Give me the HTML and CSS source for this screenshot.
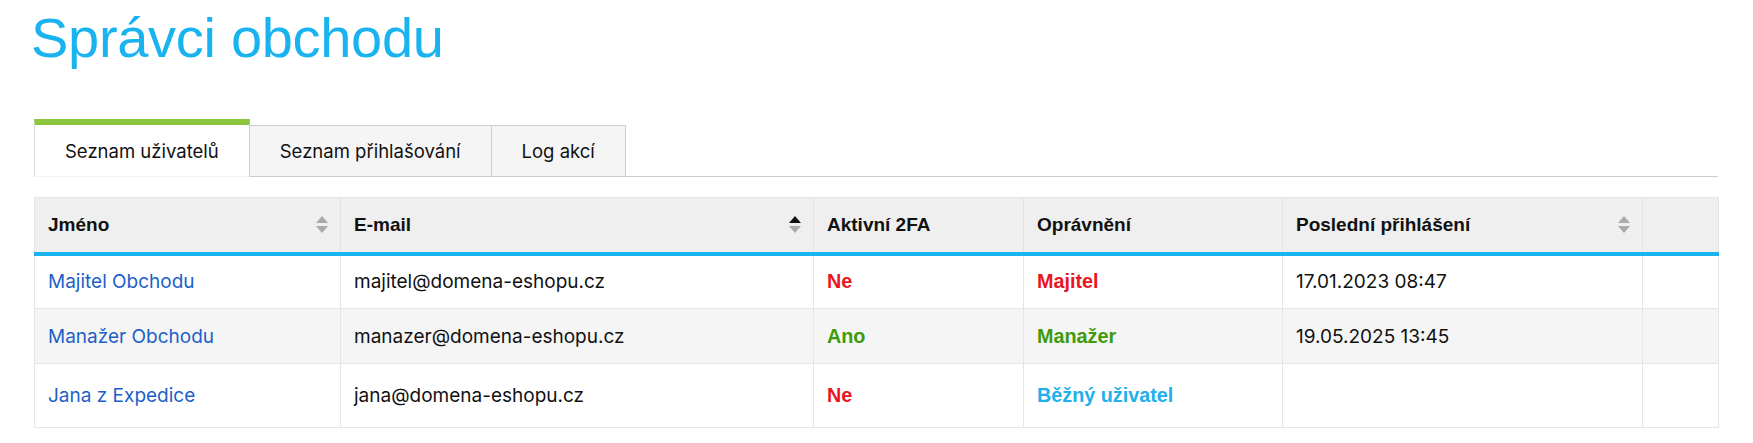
FILE: index.html
```html
<!DOCTYPE html>
<html lang="cs">
<head>
<meta charset="utf-8">
<title>Správci obchodu</title>
<link rel="stylesheet" href="styles.css">
</head>
<body>
<div class="page">
  <h1 class="title">Správci obchodu</h1>

  <div class="tabs">
    <div class="tab tab-active">Seznam uživatelů</div>
    <div class="tab">Seznam přihlašování</div>
    <div class="tab">Log akcí</div>
  </div>

  <table class="grid">
    <colgroup>
      <col class="c-name">
      <col class="c-mail">
      <col class="c-2fa">
      <col class="c-role">
      <col class="c-last">
      <col class="c-act">
    </colgroup>
    <thead>
      <tr>
        <th><div class="th-in"><span>Jméno</span><span class="sort"><i class="up"></i><i class="down"></i></span></div></th>
        <th><div class="th-in"><span>E-mail</span><span class="sort"><i class="up on"></i><i class="down"></i></span></div></th>
        <th><div class="th-in"><span>Aktivní 2FA</span></div></th>
        <th><div class="th-in"><span>Oprávnění</span></div></th>
        <th><div class="th-in"><span>Poslední přihlášení</span><span class="sort"><i class="up"></i><i class="down"></i></span></div></th>
        <th></th>
      </tr>
    </thead>
    <tbody>
      <tr class="r1">
        <td><a class="user" href="#">Majitel Obchodu</a></td>
        <td>majitel@domena-eshopu.cz</td>
        <td class="st no">Ne</td>
        <td class="st owner">Majitel</td>
        <td>17.01.2023 08:47</td>
        <td></td>
      </tr>
      <tr class="r2 alt">
        <td><a class="user" href="#">Manažer Obchodu</a></td>
        <td>manazer@domena-eshopu.cz</td>
        <td class="st yes">Ano</td>
        <td class="st manager">Manažer</td>
        <td>19.05.2025 13:45</td>
        <td></td>
      </tr>
      <tr class="r3">
        <td><a class="user" href="#">Jana z Expedice</a></td>
        <td>jana@domena-eshopu.cz</td>
        <td class="st no">Ne</td>
        <td class="st regular">Běžný uživatel</td>
        <td></td>
        <td></td>
      </tr>
    </tbody>
  </table>
</div>
</body>
</html>
```

FILE: styles.css
```css
* { box-sizing: border-box; }

html, body {
  margin: 0;
  padding: 0;
  background: #ffffff;
}

body {
  font-family: Inter, "Noto Sans", sans-serif;
  color: #111111;
}

.page {
  padding: 0 0 0 34px;
  width: 1718px;
}

.title {
  margin: 10px 0 0 -3px;
  font-family: "Liberation Sans", Arial, sans-serif;
  font-weight: 400;
  font-size: 56px;
  line-height: 56px;
  letter-spacing: -0.3px;
  color: #19b4ef;
}

.tabs {
  display: flex;
  align-items: flex-end;
  margin-top: 54px;
  height: 57px;
  border-bottom: 1px solid #cccccc;
}

.tab {
  height: 52px;
  margin-bottom: -1px;
  padding: 0 30px;
  display: flex;
  align-items: center;
  font-size: 18.5px;
  color: #111111;
  background: #f5f5f5;
  border: 1px solid #cccccc;
  border-left: none;
}

.tab-active {
  height: 58px;
  background: #ffffff;
  border-top: 6px solid #8cc63f;
  border-left: 1px solid #dddddd;
  border-right: 1px solid #cccccc;
  border-bottom: 1px solid #f2f2f2;
  padding: 0 30px;
}

.grid {
  margin-top: 20px;
  width: 1684px;
  border-collapse: collapse;
  table-layout: fixed;
  border: 1px solid #e6e6e6;
}

.c-name { width: 306px; }
.c-mail { width: 473px; }
.c-2fa  { width: 210px; }
.c-role { width: 259px; }
.c-last { width: 360px; }
.c-act  { width: 76px; }

.grid th {
  height: 56px;
  padding: 0 12px 0 13px;
  background: #efefef;
  border-right: 1px solid #e3e3e3;
  border-bottom: 4px solid #19b4ef;
  text-align: left;
  font-family: "Liberation Sans", Arial, sans-serif;
  font-weight: 700;
  font-size: 19px;
  color: #111111;
}

.th-in {
  display: flex;
  align-items: center;
  justify-content: space-between;
}

.sort {
  display: flex;
  flex-direction: column;
  gap: 3px;
  width: 12px;
}

.sort i {
  display: block;
  width: 0;
  height: 0;
  border-left: 6px solid transparent;
  border-right: 6px solid transparent;
}

.sort .up { border-bottom: 7px solid #aaaaaa; }
.sort .up.on { border-bottom-color: #111111; }
.sort .down { border-top: 7px solid #aaaaaa; }

.grid td {
  padding: 0 13px;
  font-size: 19px;
  border-right: 1px solid #e6e6e6;
  border-bottom: 1px solid #e6e6e6;
  color: #111111;
}

.grid .r1 td { height: 55px; }
.grid .r2 td { height: 55px; }
.grid .r3 td { height: 64px; }

.grid .alt td { background: #f5f5f5; }

.user {
  color: #1d5fc9;
  text-decoration: none;
}

.grid td.st {
  font-family: "Liberation Sans", Arial, sans-serif;
  font-weight: 700;
  font-size: 19.8px;
}

.grid td.no, .grid td.owner { color: #e8161f; }
.grid td.yes, .grid td.manager { color: #3e9a0b; }
.grid td.regular { color: #22b0ec; }
```
